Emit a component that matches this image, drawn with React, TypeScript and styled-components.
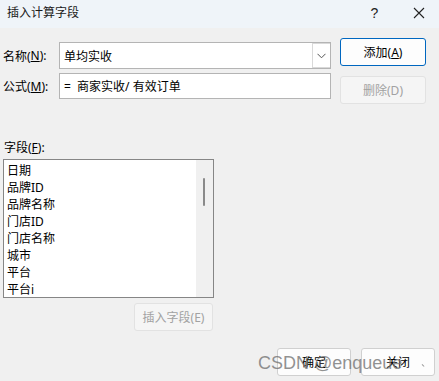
import React from "react";
import styled, { createGlobalStyle } from "styled-components";

const Global = createGlobalStyle`
  html, body { margin: 0; padding: 0; }
  body {
    width: 439px; height: 381px; overflow: hidden;
    background: #f0f0f0;
    font-family: "Noto Sans", "Noto Sans CJK SC", sans-serif;
    font-size: 12px; color: #000;
  }
`;

const Dialog = styled.div`
  position: relative;
  width: 439px;
  height: 381px;
  background: #f0f0f0;
  display: flex;
  flex-direction: column;
`;

const TitleBar = styled.div`
  height: 28px;
  background: #eff4f9;
  display: flex;
  align-items: center;
  padding-left: 7px;
  font-size: 12px;
  color: #1a1a1a;
`;

const TitleText = styled.div`
  flex: 1;
  line-height: 16px;
  margin-top: -3px;
`;

const TitleIcon = styled.div<{ $w: number }>`
  width: ${(p) => p.$w}px;
  display: flex;
  justify-content: center;
  align-items: center;
  margin-top: -3px;
  font-family: "Liberation Sans", sans-serif;
  font-size: 14px;
  color: #222;
`;

const Top = styled.div`
  display: flex;
  padding: 10px 0 0 3px;
`;

const Form = styled.div`
  margin-top: 4px;
  display: grid;
  grid-template-columns: 56px 272px;
  grid-template-rows: 27px 26px;
  row-gap: 4px;
`;

const Label = styled.div`
  display: flex;
  align-items: center;
  white-space: nowrap;
`;

const U = styled.span`
  text-decoration: underline;
  text-underline-offset: 1px;
`;

const Field = styled.div`
  box-sizing: border-box;
  border: 1px solid #b4b4b4;
  background: #fff;
  display: flex;
  align-items: center;
  padding-left: 4px;
`;

const FieldText = styled.div`
  flex: 1;
  white-space: pre;
`;

const DropBtn = styled.div`
  box-sizing: border-box;
  width: 18px;
  align-self: stretch;
  border: 1px solid #d9d9d9;
  border-right: none;
  display: flex;
  align-items: center;
  justify-content: center;
`;

const ButtonCol = styled.div`
  margin-left: 9px;
  display: flex;
  flex-direction: column;
  gap: 10px;
`;

const Btn = styled.div<{ $w: number; $primary?: boolean; $disabled?: boolean }>`
  box-sizing: border-box;
  width: ${(p) => p.$w}px;
  height: 28px;
  border-radius: 3px;
  background: ${(p) => (p.$disabled ? "#f5f5f5" : "#fdfdfd")};
  border: ${(p) =>
    p.$primary ? "1.5px solid #0067c0" : p.$disabled ? "1px solid #e2e2e2" : "1px solid #d0d0d0"};
  color: ${(p) => (p.$disabled ? "#a2a2a2" : "#000")};
  display: flex;
  align-items: center;
  justify-content: center;
  white-space: nowrap;
`;

const FieldLabel = styled.div`
  margin: 36px 0 0 4px;
  line-height: 16px;
`;

const ListBox = styled.div`
  box-sizing: border-box;
  margin: 3px 0 0 3px;
  width: 211px;
  height: 139px;
  border: 1px solid #868686;
  background: #fff;
  display: flex;
`;

const Items = styled.div`
  flex: 1;
  padding: 2px 0 0 3px;
  overflow: hidden;
`;

const Item = styled.div`
  height: 17px;
  line-height: 17px;
  white-space: nowrap;
`;

const Scroll = styled.div`
  width: 17px;
  background: #f0f0f0;
  position: relative;
`;

const Thumb = styled.div`
  position: absolute;
  left: 7px;
  top: 18px;
  width: 2px;
  height: 28px;
  background: #8a8a8a;
  border-radius: 1px;
`;

const InsertRow = styled.div`
  width: 213px;
  margin-top: 5px;
  display: flex;
  justify-content: flex-end;
`;

const Bottom = styled.div`
  margin-top: 17px;
  padding-right: 4px;
  display: flex;
  justify-content: flex-end;
  gap: 10px;
`;

const Watermark = styled.div`
  position: absolute;
  left: 258px;
  top: 353px;
  font-family: "Liberation Sans", Arial, sans-serif;
  font-size: 18px;
  line-height: 20px;
  color: rgba(110, 110, 110, 0.75);
  pointer-events: none;
  white-space: nowrap;
`;

const Tick = styled.div`
  position: absolute;
  left: 420px;
  top: 365px;
  width: 3px;
  height: 3px;
  border-right: 1px solid #9a9a9a;
  transform: rotate(-45deg);
`;

const items = ["日期", "品牌ID", "品牌名称", "门店ID", "门店名称", "城市", "平台", "平台i"];

export default function App() {
  return (
    <>
      <Global />
      <Dialog>
        <TitleBar>
          <TitleText>插入计算字段</TitleText>
          <TitleIcon $w={49}>?</TitleIcon>
          <TitleIcon $w={40}>
            <svg width="12" height="12" viewBox="0 0 12 12">
              <path d="M1 1 L11 11 M11 1 L1 11" stroke="#222" strokeWidth="1.1" fill="none" />
            </svg>
          </TitleIcon>
        </TitleBar>
        <Top>
          <Form>
            <Label>
              名称(<U>N</U>):
            </Label>
            <Field style={{ paddingRight: 0 }}>
              <FieldText>单均实收</FieldText>
              <DropBtn>
                <svg width="9" height="6" viewBox="0 0 9 6">
                  <path d="M0.5 0.8 L4.5 4.8 L8.5 0.8" stroke="#555" strokeWidth="1" fill="none" />
                </svg>
              </DropBtn>
            </Field>
            <Label>
              公式(<U>M</U>):
            </Label>
            <Field>
              <FieldText>=  商家实收/ 有效订单</FieldText>
            </Field>
          </Form>
          <ButtonCol>
            <Btn $w={86} $primary>
              添加(<U>A</U>)
            </Btn>
            <Btn $w={86} $disabled>
              删除(D)
            </Btn>
          </ButtonCol>
        </Top>
        <FieldLabel>
          字段(<U>F</U>):
        </FieldLabel>
        <ListBox>
          <Items>
            {items.map((t) => (
              <Item key={t}>{t}</Item>
            ))}
          </Items>
          <Scroll>
            <Thumb />
          </Scroll>
        </ListBox>
        <InsertRow>
          <Btn $w={79} $disabled>
            插入字段(E)
          </Btn>
        </InsertRow>
        <Bottom>
          <Btn $w={74}>确定</Btn>
          <Btn $w={74}>关闭</Btn>
        </Bottom>
        <Watermark>CSDN @enqueue</Watermark>
        <Tick />
      </Dialog>
    </>
  );
}
